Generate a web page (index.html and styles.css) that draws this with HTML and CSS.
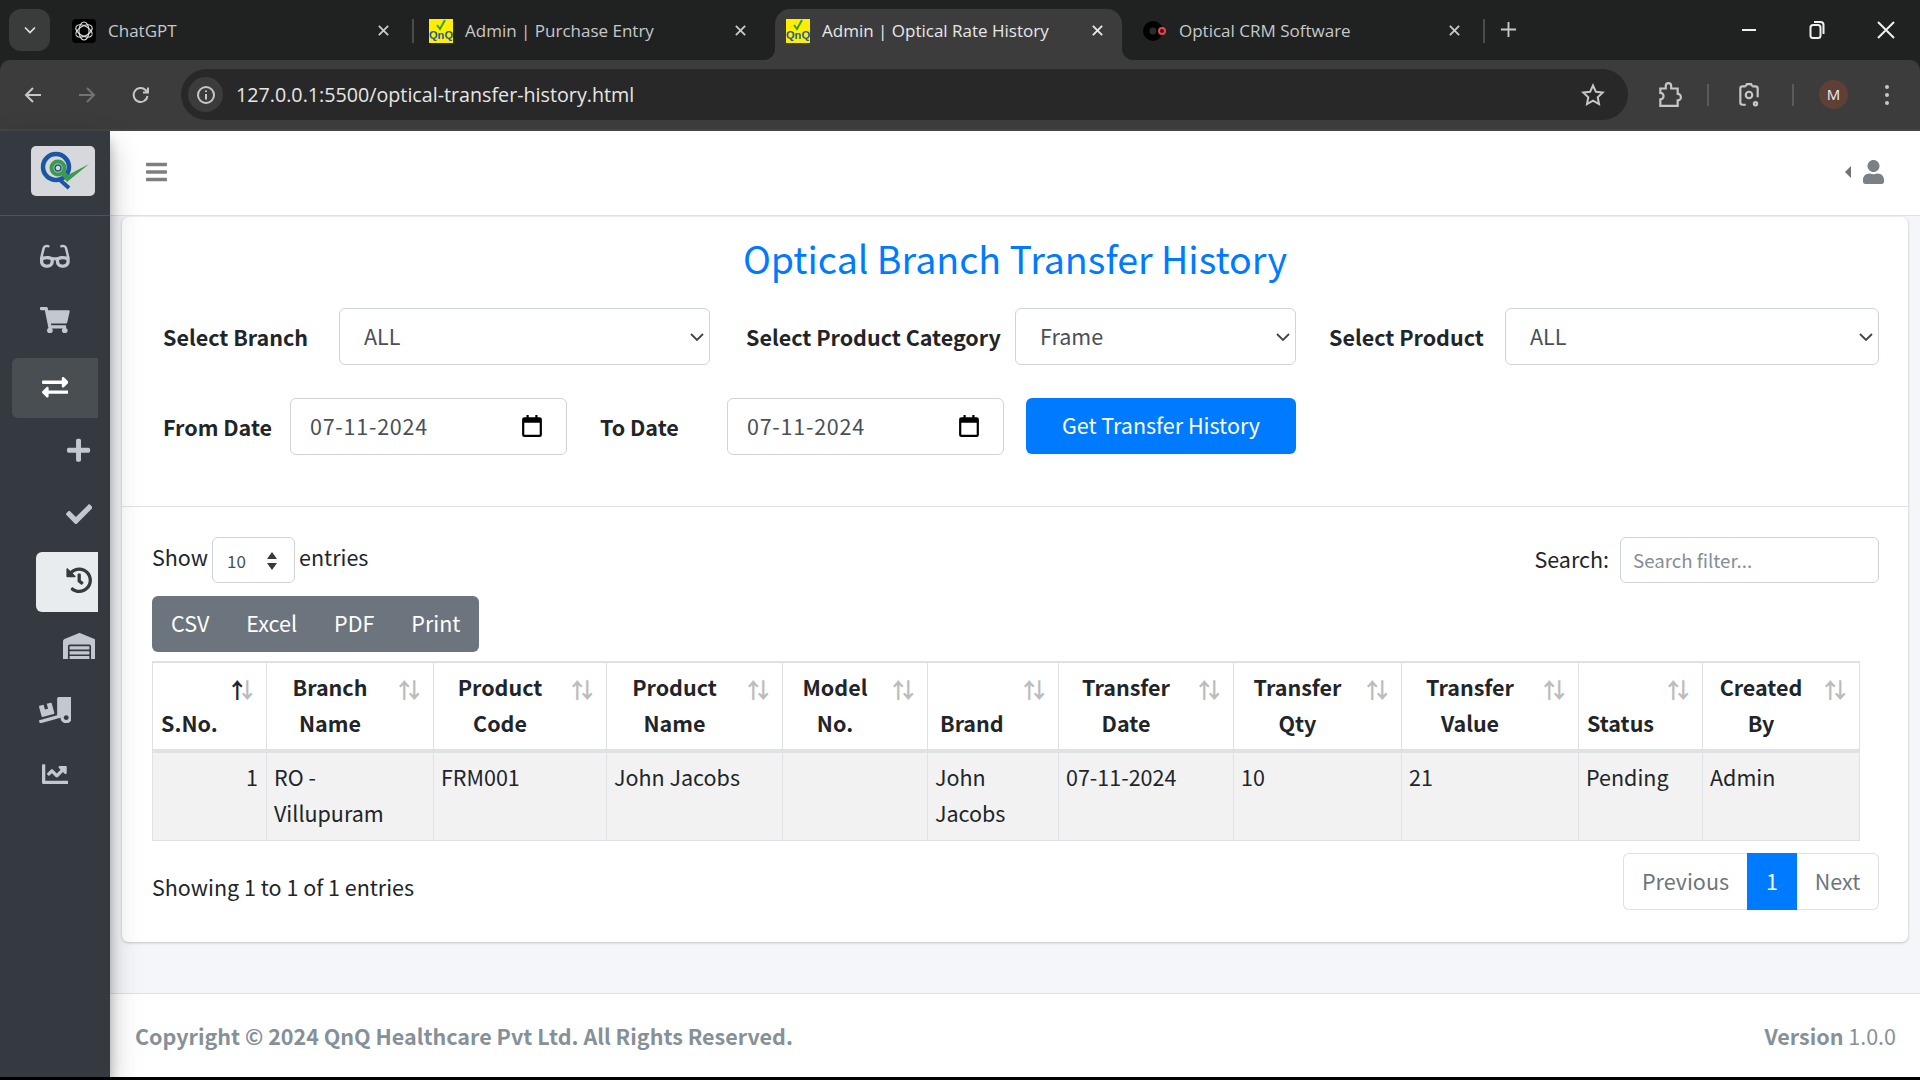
FILE: index.html
```html
<!DOCTYPE html>
<html lang="en">
<head>
  <meta charset="UTF-8">
  <meta name="viewport" content="width=device-width, initial-scale=1.0">
  <title>Admin | Optical Rate History</title>
  <link rel="stylesheet" href="styles.css">
</head>
<body>
  <!-- browser chrome -->
  <div class="tabstrip">
    <div class="tab-search"><svg class="ic-line" viewBox="0 0 24 24" width="20" height="20"><path d="M6 9l6 6 6-6"/></svg></div>
    <div class="tabs">
      <div class="tab">
        <svg class="favicon" viewBox="0 0 24 24"><rect width="24" height="24" rx="4" fill="#000"/><g fill="none" stroke="#ddd" stroke-width="1.100"><ellipse cx="12" cy="12" rx="5" ry="9"/><ellipse cx="12" cy="12" rx="5" ry="9" transform="rotate(60 12 12)"/><ellipse cx="12" cy="12" rx="5" ry="9" transform="rotate(120 12 12)"/></g></svg>
        <span class="tab-title">ChatGPT</span>
        <svg class="ic-line tab-x" viewBox="0 0 14 14"><path d="M2 2l10 10M12 2L2 12"/></svg>
      </div>
      <div class="tab tab-sep">
        <svg class="favicon" viewBox="0 0 24 24"><rect width="24" height="24" fill="#ffee00"/><path d="M8 6l3 4 5-9" fill="none" stroke="#3a9a3f" stroke-width="2"/><text class="fav-text" x="0" y="20" textLength="24" lengthAdjust="spacingAndGlyphs">QnQ</text></svg>
        <span class="tab-title">Admin | Purchase Entry</span>
        <svg class="ic-line tab-x" viewBox="0 0 14 14"><path d="M2 2l10 10M12 2L2 12"/></svg>
      </div>
      <div class="tab tab-active">
        <svg class="favicon" viewBox="0 0 24 24"><rect width="24" height="24" fill="#ffee00"/><path d="M8 6l3 4 5-9" fill="none" stroke="#3a9a3f" stroke-width="2"/><text class="fav-text" x="0" y="20" textLength="24" lengthAdjust="spacingAndGlyphs">QnQ</text></svg>
        <span class="tab-title">Admin | Optical Rate History</span>
        <svg class="ic-line tab-x" viewBox="0 0 14 14"><path d="M2 2l10 10M12 2L2 12"/></svg>
      </div>
      <div class="tab tab-sep-end">
        <svg class="favicon" viewBox="0 0 24 24"><circle cx="10" cy="12" r="10" fill="#000"/><circle cx="10" cy="12" r="3.5" fill="#2b2b2b"/><circle cx="19" cy="12" r="3" fill="#222" stroke="#f0424a" stroke-width="2"/></svg>
        <span class="tab-title">Optical CRM Software</span>
        <svg class="ic-line tab-x" viewBox="0 0 14 14"><path d="M2 2l10 10M12 2L2 12"/></svg>
      </div>
    </div>
    <svg class="ic-line new-tab" viewBox="0 0 18 18"><path d="M9 1v16M1 9h16"/></svg>
    <div class="win-btns">
      <svg class="ic-line" viewBox="0 0 16 16" width="16" height="16"><path d="M1 8h14"/></svg>
      <svg class="ic-line" viewBox="0 0 16 20" width="16" height="20"><rect x="1.5" y="5" width="10" height="13" rx="2.5"/><path d="M5 2h6.5a3 3 0 0 1 3 3v9"/></svg>
      <svg class="ic-line" viewBox="0 0 18 18" width="18" height="18"><path d="M1 1l16 16M17 1L1 17"/></svg>
    </div>
  </div>

  <div class="toolbar">
    <div class="nav-btn"><svg class="ic-line" viewBox="0 0 20 20" width="20" height="20"><path d="M18 10H3M10 3l-7 7 7 7"/></svg></div>
    <div class="nav-btn nav-btn-off"><svg class="ic-line" viewBox="0 0 20 20" width="20" height="20"><path d="M2 10h15M10 3l7 7-7 7"/></svg></div>
    <div class="nav-btn"><svg class="ic-line" viewBox="0 0 20 20" width="20" height="20"><path d="M16.5 11a7 7 0 1 1-2-6L17 7.500M17 2.500v5h-5"/></svg></div>
    <div class="omnibox">
      <div class="site-info"><svg class="ic-line" viewBox="0 0 20 20" width="20" height="20"><circle cx="10" cy="10" r="8"/><path d="M10 9v5.500M10 5.500v1.500"/></svg></div>
      <span class="url">127.0.0.1:5500/optical-transfer-history.html</span>
      <svg class="ic-line star" viewBox="0 0 24 24" width="24" height="24"><path d="M12 2.500l2.900 6.300 6.800.800-5 4.700 1.300 6.800-6-3.400-6 3.400 1.300-6.800-5-4.700 6.800-.800z"/></svg>
    </div>
    <svg class="ic-line tool-ext" viewBox="0 0 24 24" width="26" height="26"><path d="M4 6h5V3.500a2.500 2.500 0 0 1 5 0V6h6v5a2.500 2.500 0 0 1 0 6v5H4v-6a2.500 2.500 0 0 0 0-6z"/></svg>
    <span class="tool-sep tool-sep-a"></span>
    <svg class="ic-line tool-cam" viewBox="0 0 24 24" width="26" height="26"><path d="M9 4H6a2 2 0 0 0-2 2v13a2 2 0 0 0 2 2h3M15 4h3a2 2 0 0 1 2 2v8"/><path d="M9 4l1-2h4l1 2"/><circle cx="12" cy="12" r="3"/><circle cx="18" cy="20" r="1.500"/></svg>
    <span class="tool-sep tool-sep-b"></span>
    <div class="avatar">M</div>
    <div class="dots"><i></i><i></i><i></i></div>
  </div>

  <!-- page -->
  <div class="app">
    <aside class="sidebar">
      <div class="brand">
        <svg class="brand-logo" viewBox="0 0 64 50">
          <rect width="64" height="50" rx="5" fill="#d6d8db"/>
          <circle cx="25" cy="21" r="13" fill="none" stroke="#1b55a3" stroke-width="4.500"/>
          <path d="M29 34l9 8" fill="none" stroke="#1b55a3" stroke-width="4"/>
          <circle cx="27" cy="22" r="6.500" fill="none" stroke="#3a9a4d" stroke-width="4"/>
          <circle cx="27" cy="22" r="3" fill="#d6d8db" stroke="#1e5a74" stroke-width="1.500"/>
          <path d="M29 27l7 9 22-18-21 11-3-4z" fill="#3a9a4d"/>
        </svg>
      </div>
      <nav class="menu">
        <a class="menu-item"><svg class="fa" viewBox="0 0 576 512"><path d="M574.1 280.37L528.75 98.66c-5.91-23.7-21.59-44.05-43-55.81-21.44-11.73-46.97-14.11-70.19-6.33l-15.25 5.08c-8.39 2.79-12.92 11.86-10.12 20.24l5.06 15.18c2.79 8.38 11.85 12.91 20.23 10.12l13.18-4.39c10.87-3.62 23-3.57 33.16 1.73 10.29 5.37 17.57 14.56 20.37 25.82l38.46 153.82c-22.19-6.81-49.79-12.46-81.2-12.46-34.77 0-73.98 7.02-114.85 26.74h-73.18c-40.87-19.74-80.08-26.75-114.86-26.75-31.42 0-59.02 5.65-81.21 12.46l38.46-153.83c2.79-11.25 10.09-20.45 20.38-25.81 10.16-5.3 22.28-5.35 33.15-1.73l13.17 4.39c8.38 2.79 17.44-1.74 20.23-10.12l5.06-15.18c2.8-8.38-1.73-17.45-10.12-20.24l-15.25-5.08c-23.22-7.78-48.75-5.41-70.19 6.33-21.41 11.77-37.09 32.11-43 55.8L1.9 280.37A64.218 64.218 0 0 0 0 295.86v70.25C0 429.01 51.58 480 115.2 480h37.12c60.28 0 110.37-45.94 114.88-105.37l2.93-38.63h35.75l2.93 38.63C313.31 434.06 363.4 480 423.68 480h37.12c63.62 0 115.2-50.99 115.2-113.88v-70.25c0-5.23-.64-10.43-1.9-15.5zm-370.72 89.42c-1.97 25.91-24.4 46.21-51.06 46.21H115.2C86.97 416 64 393.62 64 366.11v-37.54c18.12-6.49 43.42-12.92 72.58-12.92 23.86 0 47.26 4.33 69.93 12.92l-3.13 41.22zM512 366.12c0 27.51-22.97 49.88-51.2 49.88h-37.12c-26.67 0-49.1-20.3-51.06-46.21l-3.13-41.22c22.67-8.59 46.08-12.92 69.95-12.92 29.12 0 54.43 6.44 72.55 12.93v37.54z"/></svg></a>
        <a class="menu-item"><svg class="fa" viewBox="0 0 576 512"><path d="M528.12 301.319l47.273-208C578.806 78.301 567.391 64 551.99 64H159.208l-9.166-44.81C147.758 8.021 137.93 0 126.529 0H24C10.745 0 0 10.745 0 24v16c0 13.255 10.745 24 24 24h69.883l70.248 343.435C147.325 417.1 136 435.222 136 456c0 30.928 25.072 56 56 56s56-25.072 56-56c0-15.674-6.447-29.835-16.824-40h209.647C430.447 426.165 424 440.326 424 456c0 30.928 25.072 56 56 56s56-25.072 56-56c0-22.172-12.888-41.332-31.579-50.405l5.517-24.276c3.413-15.018-8.002-29.319-23.403-29.319H218.117l-6.545-32h293.145c11.206 0 20.92-7.754 23.403-18.681z"/></svg></a>
        <a class="menu-item menu-open"><svg class="fa" viewBox="0 0 512 512"><path d="M0 168v-16c0-13.255 10.745-24 24-24h360V80c0-21.367 25.899-32.042 40.971-16.971l80 80c9.372 9.373 9.372 24.569 0 33.941l-80 80C409.956 271.982 384 261.456 384 240v-48H24c-13.255 0-24-10.745-24-24zm488 152H128v-48c0-21.314-25.862-32.08-40.971-16.971l-80 80c-9.372 9.373-9.372 24.569 0 33.941l80 80C102.057 463.997 128 453.437 128 432v-48h360c13.255 0 24-10.745 24-24v-16c0-13.255-10.745-24-24-24z"/></svg></a>
        <a class="menu-item menu-sub"><svg class="fa" viewBox="0 0 448 512"><path d="M416 208H272V64c0-17.67-14.33-32-32-32h-32c-17.67 0-32 14.33-32 32v144H32c-17.67 0-32 14.33-32 32v32c0 17.67 14.33 32 32 32h144v144c0 17.67 14.33 32 32 32h32c17.67 0 32-14.33 32-32V304h144c17.67 0 32-14.33 32-32v-32c0-17.67-14.33-32-32-32z"/></svg></a>
        <a class="menu-item menu-sub"><svg class="fa" viewBox="0 0 512 512"><path d="M173.898 439.404l-166.4-166.4c-9.997-9.997-9.997-26.206 0-36.204l36.203-36.204c9.997-9.998 26.207-9.998 36.204 0L192 312.69 432.095 72.596c9.997-9.997 26.207-9.997 36.204 0l36.203 36.204c9.997 9.997 9.997 26.206 0 36.204l-294.4 294.401c-9.998 9.997-26.207 9.997-36.204-.001z"/></svg></a>
        <a class="menu-item menu-sub menu-current"><svg class="fa" viewBox="0 0 512 512"><path d="M504 255.531c.253 136.64-111.18 248.372-247.82 248.468-59.015.042-113.223-20.53-155.822-54.911-11.077-8.94-11.905-25.541-1.839-35.607l11.267-11.267c8.609-8.609 22.353-9.551 31.891-1.984C173.062 425.135 212.781 440 256 440c101.705 0 184-82.311 184-184 0-101.705-82.311-184-184-184-48.814 0-93.149 18.969-126.068 49.932l50.754 50.754c10.08 10.08 2.941 27.314-11.313 27.314H24c-8.837 0-16-7.163-16-16V38.627c0-14.254 17.234-21.393 27.314-11.314l49.372 49.372C129.209 34.136 189.552 8 256 8c136.81 0 247.747 110.78 248 247.531zm-180.912 78.784l9.823-12.63c8.138-10.463 6.253-25.542-4.21-33.679L288 256.349V152c0-13.255-10.745-24-24-24h-16c-13.255 0-24 10.745-24 24v135.651l65.409 50.874c10.463 8.137 25.541 6.253 33.679-4.21z"/></svg></a>
        <a class="menu-item menu-sub"><svg class="fa" viewBox="0 0 640 512"><path d="M504 352H136.4c-4.4 0-8 3.6-8 8l-.1 48c0 4.4 3.6 8 8 8H504c4.4 0 8-3.6 8-8v-48c0-4.4-3.6-8-8-8zm0 96H136.1c-4.4 0-8 3.6-8 8l-.1 48c0 4.4 3.6 8 8 8h368c4.4 0 8-3.6 8-8v-48c0-4.4-3.6-8-8-8zm0-192H136.6c-4.4 0-8 3.6-8 8l-.1 48c0 4.4 3.6 8 8 8H504c4.4 0 8-3.6 8-8v-48c0-4.4-3.6-8-8-8zm106.5-139L338.4 3.7a48.15 48.15 0 0 0-36.9 0L29.5 117C11.7 124.5 0 141.9 0 161.3V504c0 4.4 3.6 8 8 8h80c4.4 0 8-3.6 8-8V256c0-17.6 14.6-32 32.6-32h382.8c18 0 32.6 14.4 32.6 32v248c0 4.4 3.6 8 8 8h80c4.4 0 8-3.6 8-8V161.3c0-19.4-11.7-36.8-29.5-44.3z"/></svg></a>
        <a class="menu-item"><svg class="fa" viewBox="0 0 640 512"><path d="M50.2 375.6c2.3 8.5 11.1 13.6 19.6 11.3l216.4-58c8.5-2.3 13.6-11.1 11.3-19.6l-49.7-185.500c-2.3-8.500-11.100-13.600-19.600-11.300L151 133.300l24.800 92.700-61.800 16.500-24.800-92.700-77.300 20.700C3.400 172.800-1.700 181.600.6 190.100l49.600 185.500zM384 0c-17.700 0-32 14.300-32 32v323.600L5.900 450c-4.300 1.200-6.800 5.600-5.600 9.800l12.600 46.300c1.200 4.300 5.600 6.800 9.800 5.600l393.700-107.400C418.800 464.100 467.600 512 528 512c61.900 0 112-50.100 112-112V0H384zm144 448c-26.500 0-48-21.500-48-48s21.500-48 48-48 48 21.500 48 48-21.500 48-48 48z"/></svg></a>
        <a class="menu-item"><svg class="fa" viewBox="0 0 512 512"><path d="M496 384H64V80c0-8.840-7.160-16-16-16H16C7.160 64 0 71.160 0 80v336c0 17.670 14.330 32 32 32h464c8.840 0 16-7.160 16-16v-32c0-8.840-7.160-16-16-16zM464 96H345.940c-21.380 0-32.090 25.850-16.970 40.970l32.400 32.400L288 242.750l-73.370-73.370c-12.500-12.500-32.760-12.500-45.250 0l-68.690 68.690c-6.250 6.250-6.250 16.380 0 22.630l22.620 22.620c6.250 6.250 16.380 6.250 22.630 0L192 237.250l73.370 73.370c12.500 12.500 32.760 12.500 45.250 0l96-96 32.400 32.400c15.120 15.120 40.970 4.410 40.970-16.970V112c.01-8.840-7.150-16-15.990-16z"/></svg></a>
      </nav>
    </aside>

    <div class="main">
      <header class="topbar">
        <svg class="bars" viewBox="0 0 448 512"><path d="M16 132h416c8.837 0 16-7.163 16-16V76c0-8.837-7.163-16-16-16H16C7.163 60 0 67.163 0 76v40c0 8.837 7.163 16 16 16zm0 160h416c8.837 0 16-7.163 16-16v-40c0-8.837-7.163-16-16-16H16c-8.837 0-16 7.163-16 16v40c0 8.837 7.163 16 16 16zm0 160h416c8.837 0 16-7.163 16-16v-40c0-8.837-7.163-16-16-16H16c-8.837 0-16 7.163-16 16v40c0 8.837 7.163 16 16 16z"/></svg>
        <div class="user-menu">
          <span class="caret-left"></span>
          <svg class="user-icon" viewBox="0 0 448 512"><path d="M224 256c70.700 0 128-57.300 128-128S294.700 0 224 0 96 57.300 96 128s57.300 128 128 128zm89.600 32h-16.700c-22.200 10.200-46.900 16-72.900 16s-50.600-5.800-72.900-16h-16.700C60.200 288 0 348.200 0 422.400V464c0 26.500 21.500 48 48 48h352c26.500 0 48-21.500 48-48v-41.600c0-74.200-60.200-134.400-134.400-134.400z"/></svg>
        </div>
      </header>

      <div class="content">
        <section class="card">
          <div class="card-head">
            <h3 class="page-title">Optical Branch Transfer History</h3>
            <div class="filter-row">
              <label class="flabel">Select Branch</label>
              <select class="control"><option>ALL</option></select>
              <label class="flabel flabel-pad">Select Product Category</label>
              <select class="control"><option>Frame</option></select>
              <label class="flabel flabel-pad-b">Select Product</label>
              <select class="control"><option>ALL</option></select>
            </div>
            <div class="date-row">
              <label class="flabel from-label">From Date</label>
              <div class="date-field">
                <span class="date-val">07-11-2024</span>
                <svg class="cal" viewBox="0 0 18 20"><path d="M4 0h2v2h6V0h2v2h2a2 2 0 0 1 2 2v14a2 2 0 0 1-2 2H2a2 2 0 0 1-2-2V4a2 2 0 0 1 2-2h2zM2 7v11h14V7z"/></svg>
              </div>
              <label class="flabel to-label">To Date</label>
              <div class="date-field">
                <span class="date-val">07-11-2024</span>
                <svg class="cal" viewBox="0 0 18 20"><path d="M4 0h2v2h6V0h2v2h2a2 2 0 0 1 2 2v14a2 2 0 0 1-2 2H2a2 2 0 0 1-2-2V4a2 2 0 0 1 2-2h2zM2 7v11h14V7z"/></svg>
              </div>
              <button class="btn-primary">Get Transfer History</button>
            </div>
          </div>

          <div class="card-body">
            <div class="dt-top">
              <div class="dt-length">
                <span>Show</span>
                <div class="len-select">
                  <span>10</span>
                  <svg viewBox="0 0 12 20" class="updown"><path d="M6 1l5 7H1zM6 19l-5-7h10z"/></svg>
                </div>
                <span>entries</span>
              </div>
              <div class="dt-search">
                <span>Search:</span>
                <input class="search-input" type="text" placeholder="Search filter...">
              </div>
            </div>

            <div class="btn-group">
              <span>CSV</span><span>Excel</span><span>PDF</span><span>Print</span>
            </div>

            <table class="dt">
              <colgroup>
                <col class="w114"><col class="w167"><col class="w173"><col class="w176"><col class="w145"><col class="w131"><col class="w175"><col class="w168"><col class="w177"><col class="w124"><col class="w157">
              </colgroup>
              <thead>
                <tr>
                  <th class="sorted">S.No.</th>
                  <th class="mid">Branch<br>Name</th>
                  <th class="mid">Product<br>Code</th>
                  <th class="mid">Product<br>Name</th>
                  <th class="mid">Model<br>No.</th>
                  <th class="th-brand">Brand</th>
                  <th class="mid">Transfer<br>Date</th>
                  <th class="mid">Transfer<br>Qty</th>
                  <th class="mid">Transfer<br>Value</th>
                  <th>Status</th>
                  <th class="mid">Created<br>By</th>
                </tr>
              </thead>
              <tbody>
                <tr>
                  <td class="num">1</td>
                  <td>RO - Villupuram</td>
                  <td>FRM001</td>
                  <td>John Jacobs</td>
                  <td></td>
                  <td>John Jacobs</td>
                  <td>07-11-2024</td>
                  <td>10</td>
                  <td>21</td>
                  <td>Pending</td>
                  <td>Admin</td>
                </tr>
              </tbody>
            </table>

            <div class="dt-bottom">
              <div class="dt-info">Showing 1 to 1 of 1 entries</div>
              <div class="pager">
                <span class="pg pg-prev">Previous</span>
                <span class="pg pg-on">1</span>
                <span class="pg pg-next">Next</span>
              </div>
            </div>
          </div>
        </section>
      </div>

      <footer class="footer">
        <strong>Copyright © 2024 QnQ Healthcare Pvt Ltd. All Rights Reserved.</strong>
        <span><b>Version</b> 1.0.0</span>
      </footer>
    </div>
  </div>
  <div class="os-edge"></div>
</body>
</html>
```

FILE: styles.css
```css
* {
  box-sizing: border-box;
}

html, body {
  margin: 0;
  height: 100%;
}

body {
  width: 1920px;
  height: 1080px;
  overflow: hidden;
  display: flex;
  flex-direction: column;
  font-family: "Noto Sans CJK SC", "Liberation Sans", sans-serif;
  font-size: 21.5px;
  line-height: 36px;
  color: #212529;
  background: #202222;
}

/* browser chrome */
.ic-line {
  fill: none;
  stroke: currentColor;
  stroke-width: 2;
}

.tabstrip {
  height: 60px;
  display: flex;
  align-items: flex-start;
  background: #202222;
  color: #c7c9c9;
  font-family: "Open Sans", "Liberation Sans", sans-serif;
  font-size: 17px;
  line-height: 24px;
}

.tab-search {
  width: 41px;
  height: 42px;
  margin: 9px 0 0 9px;
  border-radius: 12px;
  background: #3a3b3b;
  display: flex;
  align-items: center;
  justify-content: center;
  color: #e3e3e3;
}

.tabs {
  display: flex;
  margin: 9px 0 0 11px;
  gap: 10px;
}

.tab {
  position: relative;
  width: 347px;
  height: 51px;
  padding: 0 18px 8px 11px;
  display: flex;
  align-items: center;
  gap: 12px;
}

.tab-active {
  background: #3c3c3c;
  border-radius: 15px 15px 0 0;
  color: #e8e8e8;
}

.tab-active::before, .tab-active::after {
  content: "";
  position: absolute;
  bottom: 0;
  width: 12px;
  height: 12px;
}

.tab-active::before {
  left: -12px;
  background: radial-gradient(circle at 0 0, transparent 12px, #3c3c3c 12.500px);
}

.tab-active::after {
  right: -12px;
  background: radial-gradient(circle at 100% 0, transparent 12px, #3c3c3c 12.500px);
}

.tab-sep::before, .tab-sep-end::after {
  content: "";
  position: absolute;
  top: 10px;
  width: 2px;
  height: 24px;
  background: #4a4b4b;
}

.tab-sep::before {
  left: -6px;
}

.tab-sep-end::after {
  right: -6px;
}

.favicon {
  width: 24px;
  height: 24px;
  flex: none;
}

.fav-text {
  font-family: "Liberation Sans", sans-serif;
  font-size: 11px;
  font-weight: 700;
  fill: #1a5aa5;
}

.tab-title {
  flex: 1;
  white-space: nowrap;
}

.tab-x {
  width: 13px;
  height: 13px;
  flex: none;
}

.new-tab {
  width: 17px;
  height: 17px;
  margin: 21px 0 0 21px;
}

.win-btns {
  margin-left: auto;
  width: 179px;
  height: 60px;
  padding: 0 25px 0 0;
  display: flex;
  align-items: center;
  justify-content: space-between;
  color: #f0f0f0;
}

.toolbar {
  height: 71px;
  display: flex;
  align-items: center;
  padding: 0 0 0 6px;
  background: #3c3c3c;
  border-bottom: 2px solid #454545;
  border-radius: 10px 10px 0 0;
  color: #c7c7c7;
}

.nav-btn {
  width: 54px;
  display: flex;
  justify-content: center;
}

.nav-btn-off {
  color: #737373;
}

.omnibox {
  width: 1447px;
  height: 51px;
  margin-left: 13px;
  padding-left: 7px;
  border-radius: 26px;
  background: #282828;
  display: flex;
  align-items: center;
  font-family: "Open Sans", "Liberation Sans", sans-serif;
  font-size: 19.700px;
}

.site-info {
  width: 35px;
  height: 35px;
  border-radius: 50%;
  background: #3c3c3c;
  display: flex;
  align-items: center;
  justify-content: center;
}

.url {
  margin-left: 13px;
  color: #e6e6e6;
}

.star {
  margin-left: auto;
  margin-right: 23px;
}

.tool-ext {
  margin-left: 28px;
}

.tool-sep {
  width: 2px;
  height: 22px;
  background: #5a5a5a;
}

.tool-sep-a {
  margin-left: 25px;
}

.tool-cam {
  margin-left: 27px;
}

.tool-sep-b {
  margin-left: 30px;
}

.avatar {
  width: 29px;
  height: 29px;
  margin-left: 25px;
  border-radius: 50%;
  background: #5e4036;
  color: #eee;
  font-family: "Open Sans", "Liberation Sans", sans-serif;
  font-size: 15px;
  line-height: 29px;
  text-align: center;
}

.dots {
  margin-left: 37px;
  display: flex;
  flex-direction: column;
  gap: 4px;
}

.dots i {
  display: block;
  width: 4px;
  height: 4px;
  border-radius: 50%;
  background: #c7c7c7;
}

/* app layout */
.app {
  flex: 1;
  display: flex;
  min-height: 0;
  background: #f4f6f9;
}

.os-edge {
  height: 3px;
  background: #000;
}

.sidebar {
  width: 110px;
  flex: none;
  background: #343a40;
  box-shadow: 0 14px 28px rgba(0, 0, 0, .25), 0 10px 10px rgba(0, 0, 0, .22);
  position: relative;
  z-index: 2;
}

.brand {
  height: 85px;
  padding: 15px 0 0 31px;
  border-bottom: 1px solid #4b545c;
}

.brand-logo {
  display: block;
  width: 64px;
  height: 50px;
}

.menu {
  display: flex;
  flex-direction: column;
  gap: 4px;
  padding: 10px 12px 0;
}

.menu-item {
  height: 60px;
  border-radius: 6px 0 0 6px;
  display: flex;
  align-items: center;
  justify-content: center;
  color: #c2c7d0;
}

.menu-open {
  margin: 4px 0 -2px;
  padding-bottom: 2px;
  background: #494e53;
  color: #fff;
}

.menu-sub {
  margin-left: 24px;
  padding-left: 24px;
}

.menu-current {
  margin-top: 4px;
  padding-bottom: 3px;
  background: #e9ecef;
  color: #343a40;
}

.fa {
  height: 26.4px;
  width: auto;
  fill: currentColor;
  flex: none;
}

.main {
  flex: 1;
  min-width: 0;
  display: flex;
  flex-direction: column;
}

.topbar {
  height: 85px;
  padding: 0 36px 2px;
  background: #fff;
  border-bottom: 1px solid #dee2e6;
  display: flex;
  align-items: center;
  justify-content: space-between;
}

.bars {
  width: 21px;
  height: 24px;
  fill: #7f7f7f;
}

.user-menu {
  display: flex;
  align-items: center;
  gap: 12px;
}

.caret-left {
  width: 0;
  height: 0;
  border: 6px solid transparent;
  border-right: 6px solid #6e7478;
  border-left: 0;
}

.user-icon {
  width: 21px;
  height: 24px;
  fill: #7b8085;
}

.content {
  flex: 1;
  padding: 1px 12px 0;
}

.card {
  height: 725px;
  background: #fff;
  border-radius: 6px;
  box-shadow: 0 0 1px rgba(0, 0, 0, .125), 0 1px 3px rgba(0, 0, 0, .2);
}

.card-head {
  height: 290px;
  padding: 16px 0 0 41px;
  border-bottom: 1px solid #dee2e6;
}

.page-title {
  margin: 0 0 25px -41px;
  font-size: 37.600px;
  font-weight: 400;
  line-height: 50px;
  color: #007bff;
  text-align: center;
}

.filter-row {
  display: grid;
  grid-template-columns: 176px 371px 305px 281px 209px 374px;
  height: 57px;
  align-items: center;
}

.date-row {
  display: flex;
  align-items: center;
  height: 57px;
  margin-top: 33px;
}

.flabel {
  font-weight: 700;
  white-space: nowrap;
  padding-top: 1px;
}

.flabel-pad {
  padding-left: 36px;
}

.flabel-pad-b {
  padding-left: 33px;
}

.from-label {
  width: 127px;
}

.to-label {
  width: 160px;
  padding-left: 33px;
}

.control {
  width: 100%;
  height: 57px;
  padding: 0 30px 2px 24px;
  border: 1px solid #ced4da;
  border-radius: 6px;
  background: #fff url("data:image/svg+xml,%3Csvg xmlns='http://www.w3.org/2000/svg' viewBox='0 0 14 8'%3E%3Cpath d='M1 1l6 6 6-6' fill='none' stroke='%23444' stroke-width='1.800'/%3E%3C/svg%3E") no-repeat right 5px center / 14px 8px;
  appearance: none;
  font: inherit;
  color: #495057;
}

.date-field {
  width: 277px;
  height: 57px;
  padding: 0 24px 1px 19px;
  border: 1px solid #ced4da;
  border-radius: 6px;
  display: flex;
  align-items: center;
  justify-content: space-between;
  color: #495057;
}

.date-val {
  letter-spacing: .75px;
}

.cal {
  width: 20px;
  height: 22px;
  fill: #000;
}

.btn-primary {
  width: 270px;
  height: 56px;
  margin-left: 22px;
  padding-bottom: 3px;
  align-self: flex-start;
  border: 0;
  border-radius: 6px;
  background: #007bff;
  color: #fff;
  font: inherit;
}

.card-body {
  padding: 30px 29px 0 30px;
}

.dt-top {
  display: flex;
  justify-content: space-between;
  height: 46px;
}

.dt-length {
  display: flex;
  align-items: center;
  gap: 4px;
  height: 46px;
  padding-bottom: 6px;
}

.len-select {
  width: 83px;
  height: 46px;
  margin-bottom: -6px;
  padding: 2px 16px 0 14px;
  border: 1px solid #ced4da;
  border-radius: 6px;
  display: flex;
  align-items: center;
  justify-content: space-between;
  font-size: 17px;
  color: #495057;
}

.updown {
  width: 12px;
  height: 20px;
  fill: #343a40;
}

.dt-search {
  display: flex;
  align-items: center;
  gap: 11px;
  padding-bottom: 2px;
}

.search-input {
  width: 259px;
  height: 46px;
  margin-bottom: -2px;
  padding: 0 12px 2px;
  border: 1px solid #ced4da;
  border-radius: 6px;
  font: inherit;
  font-size: 18.700px;
  color: #495057;
}

.search-input::placeholder {
  color: #868e96;
  opacity: 1;
}

.btn-group {
  display: inline-flex;
  height: 56px;
  margin-top: 13px;
  padding: 0 19px 2px;
  gap: 37px;
  align-items: center;
  border-radius: 6px;
  background: #6c757d;
  color: #fff;
}

.dt {
  width: 1707px;
  margin-top: 9px;
  table-layout: fixed;
  border-collapse: collapse;
  border: 1px solid #dee2e6;
  border-top: 2px solid #dee2e6;
}

.w114 { width: 114px; }
.w167 { width: 167px; }
.w173 { width: 173px; }
.w176 { width: 176px; }
.w145 { width: 145px; }
.w131 { width: 131px; }
.w175 { width: 175px; }
.w168 { width: 168px; }
.w177 { width: 177px; }
.w124 { width: 124px; }
.w157 { width: 157px; }

.dt th, .dt td {
  padding: 6px 8px 9px 7px;
  border: 1px solid #dee2e6;
  text-align: left;
}

.dt th {
  position: relative;
  padding: 6px 8px 8px 8px;
  vertical-align: bottom;
  border-bottom: 4px solid #dee2e6;
  font-weight: 700;
}

.dt th.th-brand {
  padding-left: 12px;
}

.dt th.mid {
  padding-right: 48px;
  text-align: center;
}

.dt th::before, .dt th::after {
  position: absolute;
  top: 8px;
  font-size: 21.500px;
  font-weight: 700;
  opacity: .3;
}

.dt th::before {
  content: "\2191";
  right: 18px;
}

.dt th::after {
  content: "\2193";
  right: 8px;
}

.dt th.sorted::before {
  opacity: 1;
}

.dt td {
  vertical-align: top;
  background: #f2f2f2;
}

.dt td.num {
  text-align: right;
}

.dt-bottom {
  display: flex;
  justify-content: space-between;
  margin-top: 12px;
}

.dt-info {
  padding-top: 16px;
}

.pager {
  display: flex;
  height: 57px;
  color: #6c757d;
}

.pg {
  display: flex;
  align-items: center;
  justify-content: center;
  padding-bottom: 2px;
  border: 1px solid #dee2e6;
}

.pg-prev {
  width: 124px;
  border-radius: 6px 0 0 6px;
  border-right: 0;
}

.pg-on {
  width: 50px;
  border-color: #007bff;
  background: #007bff;
  color: #fff;
}

.pg-next {
  width: 82px;
  border-radius: 0 6px 6px 0;
  border-left: 0;
}

.footer {
  height: 84px;
  padding: 0 24px 0 25px;
  background: #fff;
  border-top: 1px solid #dee2e6;
  display: flex;
  align-items: center;
  justify-content: space-between;
  color: #869099;
}
```
